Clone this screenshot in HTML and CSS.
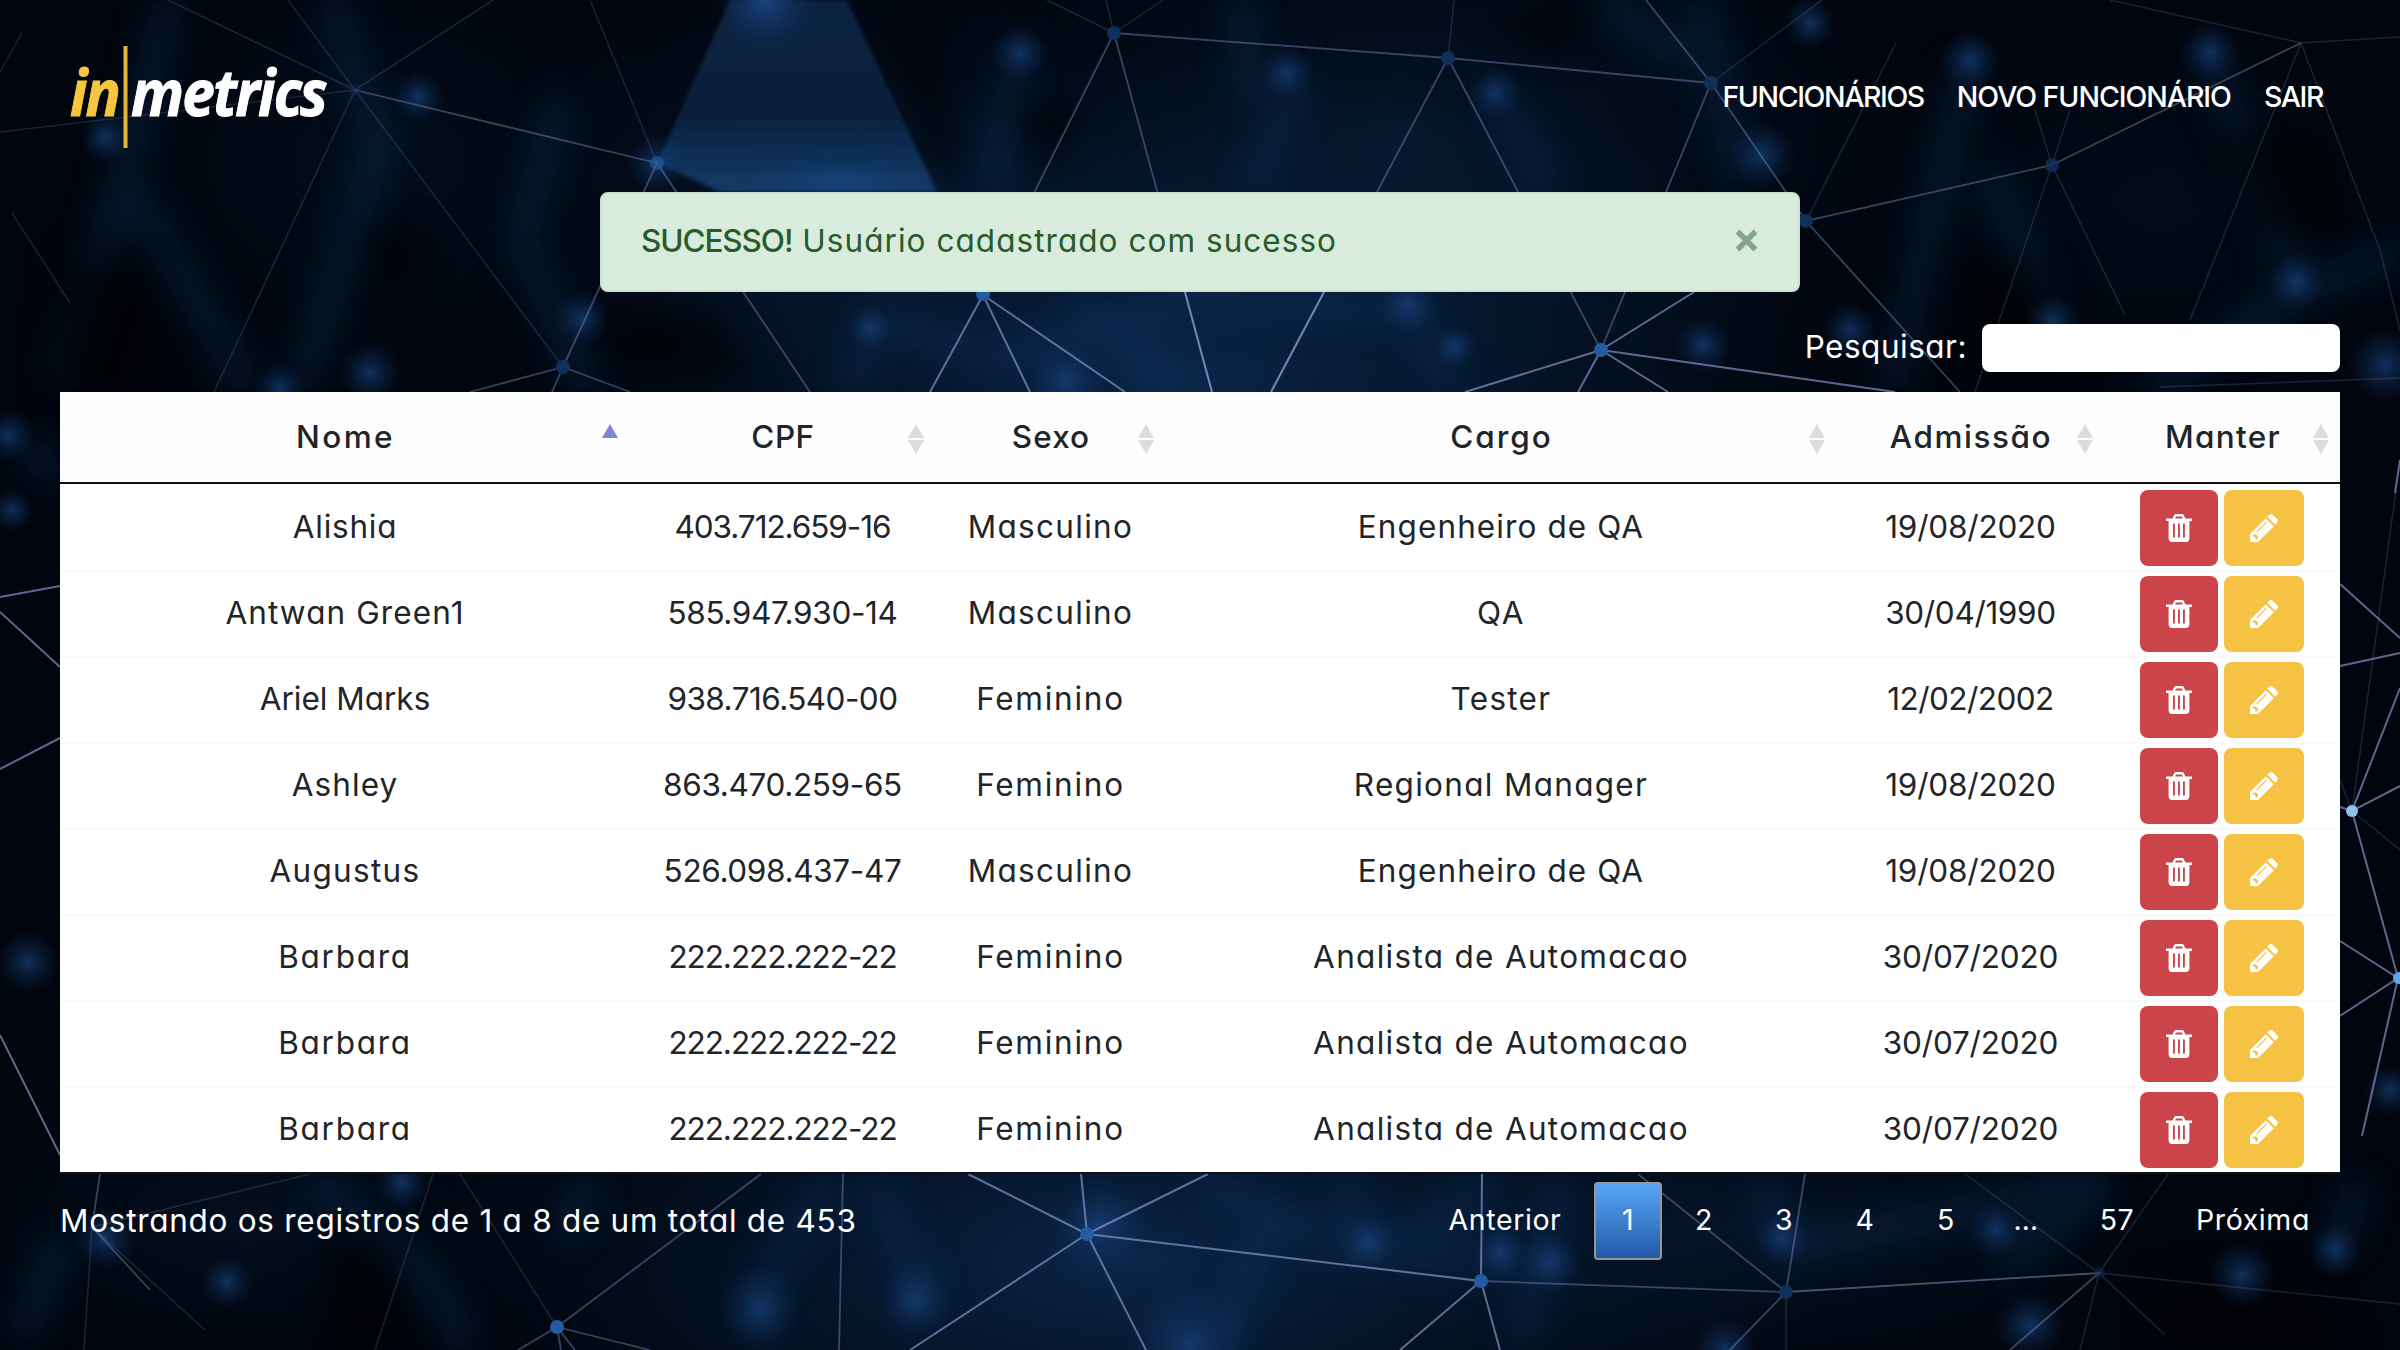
FILE: index.html
```html
<!DOCTYPE html>
<html lang="pt-BR">
<head>
<meta charset="utf-8">
<title>Funcionários</title>
<link rel="stylesheet" href="styles.css">
</head>
<body>
<svg class="defs" width="0" height="0">
  <symbol id="trash" viewBox="0 0 26 28">
    <path fill="currentColor" fill-rule="evenodd" d="M0 4.6h6.6L8 1.4Q8.600 0 10 0h6q1.400 0 2 1.400l1.400 3.200H26v2.400h-2.600V24q0 4-3.600 4H6.200Q2.600 28 2.600 24V7H0zM9.200 4.600h7.600l-.8-2.200h-6zM7 9.400v14.200h1.900V9.400zM12 9.400v14.200h1.900V9.400zM17 9.400v14.200h1.900V9.400z"/>
  </symbol>
  <symbol id="pencil" viewBox="0 0 28 28">
    <path fill="currentColor" fill-rule="evenodd" d="M0 20 15.800 4.200l8 8L8 28H0zM2.600 21l.6 1.400 1.800.6.600 2.200 1.400.2 1.200-1.600-1.200-2.800-2.600-.8zM6.200 17.600l.8.8L16.800 8.600l-.8-.8z"/>
    <path fill="currentColor" d="m17.200 2.800 2-2q1.800-1.600 3.600 0l4.400 4.400q1.600 1.800 0 3.600l-2 2z"/>
  </symbol>
  <symbol id="sort" viewBox="0 0 16 30">
    <path fill="#dcdcdc" d="M8 0 16 14H0zM0 16h16L8 30z"/>
  </symbol>
  <symbol id="sort-asc" viewBox="0 0 16 30">
    <path fill="#7f86da" d="M8 0 16 14H0z"/>
  </symbol>
</svg>

<svg class="backdrop" viewBox="0 0 2400 1350" aria-hidden="true">
  <defs>
    <radialGradient id="glow"><stop offset="0" stop-color="#1b4c8e" stop-opacity=".6"/><stop offset=".4" stop-color="#153f77" stop-opacity=".38"/><stop offset="1" stop-color="#0d3266" stop-opacity="0"/></radialGradient>
    <radialGradient id="haze"><stop offset="0" stop-color="#113c70" stop-opacity=".6"/><stop offset="1" stop-color="#0b2a55" stop-opacity="0"/></radialGradient>
    <linearGradient id="beam" x1="0" y1="0" x2="0" y2="1"><stop offset="0" stop-color="#0b2748"/><stop offset=".6" stop-color="#092341"/><stop offset="1" stop-color="#15406f"/></linearGradient>
    <filter id="soft" x="-5%" y="-5%" width="110%" height="110%"><feGaussianBlur stdDeviation="17"/></filter>
    <filter id="edge"><feGaussianBlur stdDeviation="2"/></filter>
  </defs>
  <rect width="2400" height="1350" fill="#01050d"/>
  <g fill="url(#haze)">
    <ellipse cx="1180" cy="380" rx="680" ry="330"/>
    <ellipse cx="820" cy="180" rx="330" ry="230" opacity=".45"/>
    <ellipse cx="1400" cy="140" rx="560" ry="280" opacity=".45"/>
    <ellipse cx="1130" cy="1260" rx="700" ry="290"/>
    <ellipse cx="1750" cy="1230" rx="420" ry="160" opacity=".4"/>
    <ellipse cx="250" cy="1220" rx="330" ry="150" opacity=".3"/>
    <ellipse cx="380" cy="160" rx="300" ry="230" opacity=".25"/>
    <ellipse cx="2160" cy="200" rx="320" ry="200" opacity=".2"/>
  </g>
  <g filter="url(#soft)" stroke="#103a6c" stroke-width="32" opacity=".32" fill="none">
    <path d="M170 0 120 190 60 380M130 190 250 390M330 0 380 140 300 390M560 100 520 240 590 390M1020 60 990 190M1300 80 1250 190M1500 100 1550 190M1600 0 1690 60M1970 60 1890 390M2210 60 2300 290 2150 390M2050 320 1990 170M2300 290 2400 250M880 310 850 390M1080 300 1180 390M1410 300 1450 390M1240 0 1250 100M1700 0 1740 180M880 320 1000 360 1180 300 1410 310"/>
    <path d="M310 1180 420 1270 470 1350M590 1180 560 1240M830 1180 750 1310M870 1180 930 1300M1340 1180 1380 1250 1500 1180M1760 1180 1790 1250 2100 1180M2110 1180 2000 1270M20 440 60 480M20 1340 60 1240M2360 1180 2335 1250M1200 1180 1360 1250 1560 1260M1220 1350 1280 1200M1560 1180 1520 1340"/>
  </g>
  <g filter="url(#soft)" fill="#000206" opacity=".6">
    <path d="M890 20h40l30 150h-30zM60 260h80l20 130H50zM360 230h70l-30 90zM1480 10h110l-30 50zM1960 260h80l40 110h-110zM2200 130h130l20 110h-90zM330 1230h60l20 120h-90zM2150 1280h150l60 70h-200zM600 310h110l50 70H620zM1010 100h80l-50 80z"/>
  </g>
  <path filter="url(#edge)" fill="url(#beam)" opacity=".9" d="M730 0h117l90 192H720l-63-29z"/>
  <g fill="url(#glow)">
    <ellipse cx="765" cy="0" rx="50" ry="50"/><ellipse cx="765" cy="0" rx="40" ry="40"/><circle cx="657" cy="163" r="30"/><ellipse cx="840" cy="180" rx="110" ry="30"/>
    <circle cx="418" cy="97" r="26"/><circle cx="105" cy="137" r="26"/><circle cx="582" cy="318" r="28"/><circle cx="370" cy="373" r="32"/><circle cx="280" cy="388" r="26"/>
    <circle cx="1020" cy="53" r="30"/><circle cx="1287" cy="73" r="28"/><circle cx="1495" cy="93" r="28"/><circle cx="1762" cy="155" r="34"/><circle cx="1810" cy="23" r="26"/><circle cx="1970" cy="60" r="30"/><circle cx="2210" cy="52" r="30"/><circle cx="2296" cy="282" r="28"/><circle cx="2053" cy="322" r="28"/><circle cx="1850" cy="330" r="28"/><circle cx="1703" cy="345" r="28"/><circle cx="1408" cy="305" r="30"/><circle cx="1455" cy="347" r="22"/><circle cx="870" cy="328" r="22"/><circle cx="1065" cy="382" r="40"/><circle cx="2385" cy="365" r="38"/>
    <circle cx="8" cy="435" r="26"/><circle cx="12" cy="510" r="22"/><circle cx="28" cy="962" r="32"/><circle cx="2390" cy="1090" r="26"/>
    <ellipse cx="402" cy="1182" rx="26" ry="30"/><circle cx="227" cy="1282" r="26"/><circle cx="105" cy="1238" r="32"/><ellipse cx="760" cy="1310" rx="42" ry="46"/><ellipse cx="915" cy="1300" rx="38" ry="40"/><circle cx="1100" cy="1226" r="50"/><circle cx="1368" cy="1243" r="30"/><ellipse cx="1500" cy="1252" rx="26" ry="32"/><circle cx="1550" cy="1262" r="32"/><circle cx="1782" cy="1238" r="28"/><circle cx="1996" cy="1230" r="28"/><ellipse cx="2335" cy="1250" rx="26" ry="28"/><circle cx="2242" cy="1275" r="34"/><ellipse cx="2030" cy="1325" rx="36" ry="34"/><circle cx="1190" cy="1345" r="66"/><circle cx="1725" cy="1350" r="32"/>
  </g>
  <g stroke="#8d94c0" stroke-width="1.500" fill="none" opacity=".2">
    <path d="M355 90 168 0M355 90 288 0M355 90 493 0M355 90 0 132M355 90 214 392M355 90 563 367M12 213 70 303M22 33 0 72M657 163 590 0"/>
    <path d="M1114 33 1047 0M1114 33 1106 0M1114 33 1163 0M1448 58 1454 0M1896 43 1806 221M2052 165 2035 110M2052 165 2070 110M2052 165 1975 392M2052 165 2125 315M2301 43 2110 0M2301 43 2400 37M2301 43 2190 320M2301 43 2380 250 2400 330M2160 387 2400 378M1711 83 1822 0"/>
    <path d="M433 1174 375 1350M557 1327 460 1174M92 1227 84 1350M92 1227 205 1330M92 1227 310 1174M2099 1273 1965 1174M2099 1273 2168 1174M2099 1273 2080 1350M2099 1273 2165 1335M2099 1273 2400 1304M1786 1292 2099 1273M1786 1292V1350M2396 490 2352 811 2340 780M2352 811 2400 850"/>
  </g>
  <g stroke="#8c98d0" stroke-width="1.800" fill="none" opacity=".4">
    <path d="M355 90 657 163M657 163 810 392M563 367 657 163M563 367 470 392M563 367 552 392M563 367 630 392M1114 33 1448 58 1711 83M1114 33 983 295M1114 33 1212 392M1448 58 1271 392M1448 58 1601 350M1711 83 1646 0M1711 83 1601 350M1711 83 1806 221 2052 165 2301 43M1806 221 1960 392"/>
    <path d="M92 1227 100 1174M92 1227 150 1290M557 1327 761 1174M557 1327 518 1350M557 1327 561 1350M557 1327 575 1350M557 1327 650 1350M843 1174 839 1350M1786 1292 1638 1174M1786 1292 1805 1174M1786 1292 1730 1350M1481 1281 1786 1292 2099 1273 2010 1350" />
  </g>
  <g stroke="#9aa8e2" stroke-width="2" fill="none" opacity=".6">
    <path d="M983 295 930 392M983 295 1030 392M983 295 1125 392M1185 292 1212 392M1324 292 1271 392M1601 350 1465 392M1601 350 1578 392M1601 350 1668 392M1601 350 1895 392M1601 350 1694 292"/>
    <path d="M1087 1234 968 1174M1087 1234 1081 1174M1087 1234 1208 1174M1087 1234 910 1350M1087 1234 1146 1350M1087 1234 1481 1281 1482 1174M1481 1281 1400 1350M1481 1281 1500 1350"/>
    <path d="M2340 584 2400 638M2340 666 2400 653M2400 688 2352 811 2400 786M2352 811 2398 978M2340 941 2398 978 2340 1016M2398 978 2362 1136M2400 460 2395 493M2340 807 2352 811M0 597 60 586M0 612 60 667M0 769 60 738M0 1035 60 1155"/>
  </g>
  <g fill="#10305c">
    <circle cx="355" cy="90" r="6" opacity=".4"/><circle cx="563" cy="367" r="7"/><circle cx="1114" cy="33" r="7"/><circle cx="1448" cy="58" r="7"/><circle cx="1711" cy="83" r="7"/><circle cx="1806" cy="221" r="7"/><circle cx="2052" cy="165" r="7" opacity=".8"/><circle cx="1786" cy="1292" r="7"/><circle cx="2099" cy="1273" r="6" opacity=".4"/>
  </g>
  <g fill="#245ba3">
    <circle cx="657" cy="163" r="7" opacity=".6"/><circle cx="983" cy="294" r="7"/><circle cx="1601" cy="350" r="7"/><circle cx="557" cy="1327" r="7"/><circle cx="1087" cy="1234" r="7"/><circle cx="1481" cy="1281" r="7"/><circle cx="2399" cy="978" r="6" fill="#5ea5ea"/><circle cx="2352" cy="811" r="6" fill="#8cc4ee"/>
  </g>
</svg>

<header class="topbar">
  <svg class="logo" width="290" height="110" viewBox="0 0 290 110" role="img" aria-label="inmetrics">
    <text class="logo-text logo-in" x="2" y="74" textLength="49" lengthAdjust="spacingAndGlyphs">in</text>
    <rect x="55.500" y="4" width="4" height="102" fill="#e3b63a"/>
    <text class="logo-text" x="63" y="74" textLength="195" lengthAdjust="spacingAndGlyphs">metrics</text>
  </svg>
  <nav class="menu">
    <a class="k-13">FUNCIONÁRIOS</a><a class="k-9">NOVO FUNCIONÁRIO</a><a class="k-13">SAIR</a>
  </nav>
</header>

<div class="alert">
  <p><strong>SUCESSO!</strong> Usuário cadastrado com sucesso</p>
  <button class="close" aria-label="Fechar"><svg width="23" height="23" viewBox="0 0 23 23"><path d="M2.500 2.500 20.500 20.500M20.500 2.500 2.500 20.500" stroke="currentColor" stroke-width="5.500"/></svg></button>
</div>

<main class="panel">
  <div class="search"><label for="q">Pesquisar:</label><input id="q" type="search"></div>
  <table class="grid">
    <colgroup><col class="c-nome"><col class="c-cpf"><col class="c-sexo"><col class="c-cargo"><col class="c-adm"><col class="c-manter"></colgroup>
    <thead><tr>
      <th class="k24">Nome<svg class="sort"><use href="#sort-asc"/></svg></th>
      <th class="k5">CPF<svg class="sort"><use href="#sort"/></svg></th>
      <th class="k11">Sexo<svg class="sort"><use href="#sort"/></svg></th>
      <th class="k20">Cargo<svg class="sort"><use href="#sort"/></svg></th>
      <th class="k15">Admissão<svg class="sort"><use href="#sort"/></svg></th>
      <th class="k13">Manter<svg class="sort"><use href="#sort"/></svg></th>
    </tr></thead>
    <tbody>
      <tr><td class="k7">Alishia</td><td class="k-9">403.712.659-16</td><td class="k13">Masculino</td><td class="k11">Engenheiro de QA</td><td class="k-2">19/08/2020</td><td><div class="actions"><button class="btn del"><svg><use href="#trash"/></svg></button><button class="btn edit"><svg><use href="#pencil"/></svg></button></div></td></tr>
      <tr><td class="k11">Antwan Green1</td><td class="k-3">585.947.930-14</td><td class="k13">Masculino</td><td class="k15">QA</td><td class="k-3">30/04/1990</td><td><div class="actions"><button class="btn del"><svg><use href="#trash"/></svg></button><button class="btn edit"><svg><use href="#pencil"/></svg></button></div></td></tr>
      <tr><td>Ariel Marks</td><td class="k-5">938.716.540-00</td><td class="k17">Feminino</td><td class="k13">Tester</td><td class="k-5">12/02/2002</td><td><div class="actions"><button class="btn del"><svg><use href="#trash"/></svg></button><button class="btn edit"><svg><use href="#pencil"/></svg></button></div></td></tr>
      <tr><td class="k11">Ashley</td><td class="k-3">863.470.259-65</td><td class="k17">Feminino</td><td class="k13">Regional Manager</td><td class="k-2">19/08/2020</td><td><div class="actions"><button class="btn del"><svg><use href="#trash"/></svg></button><button class="btn edit"><svg><use href="#pencil"/></svg></button></div></td></tr>
      <tr><td class="k13">Augustus</td><td class="k-3">526.098.437-47</td><td class="k13">Masculino</td><td class="k11">Engenheiro de QA</td><td class="k-2">19/08/2020</td><td><div class="actions"><button class="btn del"><svg><use href="#trash"/></svg></button><button class="btn edit"><svg><use href="#pencil"/></svg></button></div></td></tr>
      <tr><td class="k17">Barbara</td><td class="k-9">222.222.222-22</td><td class="k17">Feminino</td><td class="k13">Analista de Automacao</td><td class="k-2">30/07/2020</td><td><div class="actions"><button class="btn del"><svg><use href="#trash"/></svg></button><button class="btn edit"><svg><use href="#pencil"/></svg></button></div></td></tr>
      <tr><td class="k17">Barbara</td><td class="k-9">222.222.222-22</td><td class="k17">Feminino</td><td class="k13">Analista de Automacao</td><td class="k-2">30/07/2020</td><td><div class="actions"><button class="btn del"><svg><use href="#trash"/></svg></button><button class="btn edit"><svg><use href="#pencil"/></svg></button></div></td></tr>
      <tr><td class="k17">Barbara</td><td class="k-9">222.222.222-22</td><td class="k17">Feminino</td><td class="k13">Analista de Automacao</td><td class="k-2">30/07/2020</td><td><div class="actions"><button class="btn del"><svg><use href="#trash"/></svg></button><button class="btn edit"><svg><use href="#pencil"/></svg></button></div></td></tr>
    </tbody>
  </table>
  <footer class="foot">
    <p class="info">Mostrando os registros de 1 a 8 de um total de 453</p>
    <nav class="pages"><a>Anterior</a><a class="current">1</a><a>2</a><a>3</a><a>4</a><a>5</a><span>…</span><a>57</a><a>Próxima</a></nav>
  </footer>
</main>
</body>
</html>
```
FILE: styles.css
```css
* { box-sizing: border-box; margin: 0; padding: 0; }
html, body { width: 2400px; height: 1350px; overflow: hidden; }
body {
  background: #01050d;
  color: #212529;
  font: 400 31.5px/48px Inter, "Open Sans", sans-serif;
  font-feature-settings: "cv11";
  -webkit-font-smoothing: antialiased;
}
button { border: 0; font: inherit; }
.defs, .backdrop { position: absolute; top: 0; left: 0; }
.backdrop { width: 2400px; height: 1350px; z-index: -1; }

/* tracking steps */
.k-13 { letter-spacing: -1.4px; }
.k-9 { letter-spacing: -1.05px; }
.k-5 { letter-spacing: -.55px; }
.k-3 { letter-spacing: -.35px; }
.k-2 { letter-spacing: -.2px; }
.k5 { letter-spacing: .5px; }
.k7 { letter-spacing: .75px; }
.k11 { letter-spacing: 1.1px; }
.k13 { letter-spacing: 1.3px; }
.k15 { letter-spacing: 1.55px; }
.k17 { letter-spacing: 1.75px; }
.k20 { letter-spacing: 2px; }
.k24 { letter-spacing: 2.4px; }

.topbar {
  display: flex;
  justify-content: space-between;
  height: 192px;
  padding: 42px 77px 0 68px;
}
.logo-text { font: italic 700 64px "Open Sans", sans-serif; fill: #fff; stroke: #fff; stroke-width: 1px; letter-spacing: -2px; }
.logo-in { fill: #f6c63f; stroke: #f6c63f; }
.menu { display: flex; gap: 33px; padding-top: 31px; font-size: 28.5px; font-weight: 500; color: #fff; }

.alert {
  display: flex;
  justify-content: space-between;
  align-items: center;
  width: 1200px;
  height: 100px;
  margin: 0 auto;
  padding: 0 40px 3px 39px;
  background: #d9ebdc;
  border: 2px solid #cbe3cf;
  border-radius: 8px;
  color: #285b2a;
  letter-spacing: 1.05px;
}
.alert strong { font-weight: 500; letter-spacing: -1.1px; }
.close { display: flex; background: none; color: #84a588; }

.panel { width: 2280px; margin: 0 auto; padding-top: 32px; }
.search { display: flex; justify-content: flex-end; align-items: center; gap: 15px; height: 48px; color: #fff; letter-spacing: .5px; }
.search label { padding-bottom: 2px; }
.search input { width: 358px; height: 48px; border: 0; border-radius: 8px; background: #fff; }

.grid {
  width: 2280px;
  margin-top: 20px;
  table-layout: fixed;
  border-collapse: separate;
  border-spacing: 0;
  border-bottom: 2px solid #111;
  background: #fff;
}
.c-nome { width: 569px; }
.c-cpf { width: 306px; }
.c-sexo { width: 230px; }
.c-cargo { width: 671px; }
.c-adm { width: 268px; }
.c-manter { width: 236px; }
.grid th { position: relative; height: 92px; background: #fdfdfd; border-bottom: 2px solid #111; font-weight: 500; padding-left: 2px; }
.sort { position: absolute; right: 11px; top: 32px; width: 16px; height: 30px; }
.grid td { height: 86px; border-top: 2px solid #fafafa; text-align: center; vertical-align: middle; padding: 0 0 3px 1px; }
.grid td:last-child { padding: 0; }
.grid tbody tr:first-child td { border-top-color: #fff; }
.actions { display: flex; justify-content: center; gap: 6px; padding-bottom: 1px; }
.btn { display: flex; align-items: center; justify-content: center; height: 76px; border-radius: 8px; color: #fff; }
.btn svg { width: 28px; height: 28px; }
.del { width: 78px; background: #cb444a; }
.edit { width: 80px; background: #f5c244; }

.foot { display: flex; justify-content: space-between; color: #fff; }
.info { padding-top: 23px; letter-spacing: .72px; }
.pages {
  display: grid;
  grid-template-columns: 178px 68px 84px 76px 86px 76px 84px 98px 174px;
  margin-top: 8px;
  height: 78px;
  text-align: center;
  font-size: 28.5px;
  line-height: 75px;
  letter-spacing: .6px;
}
.pages .current {
  border: 2px solid #979797;
  border-radius: 4px;
  background: linear-gradient(#58a5f7, #2259a5);
  line-height: 71px;
}
```
